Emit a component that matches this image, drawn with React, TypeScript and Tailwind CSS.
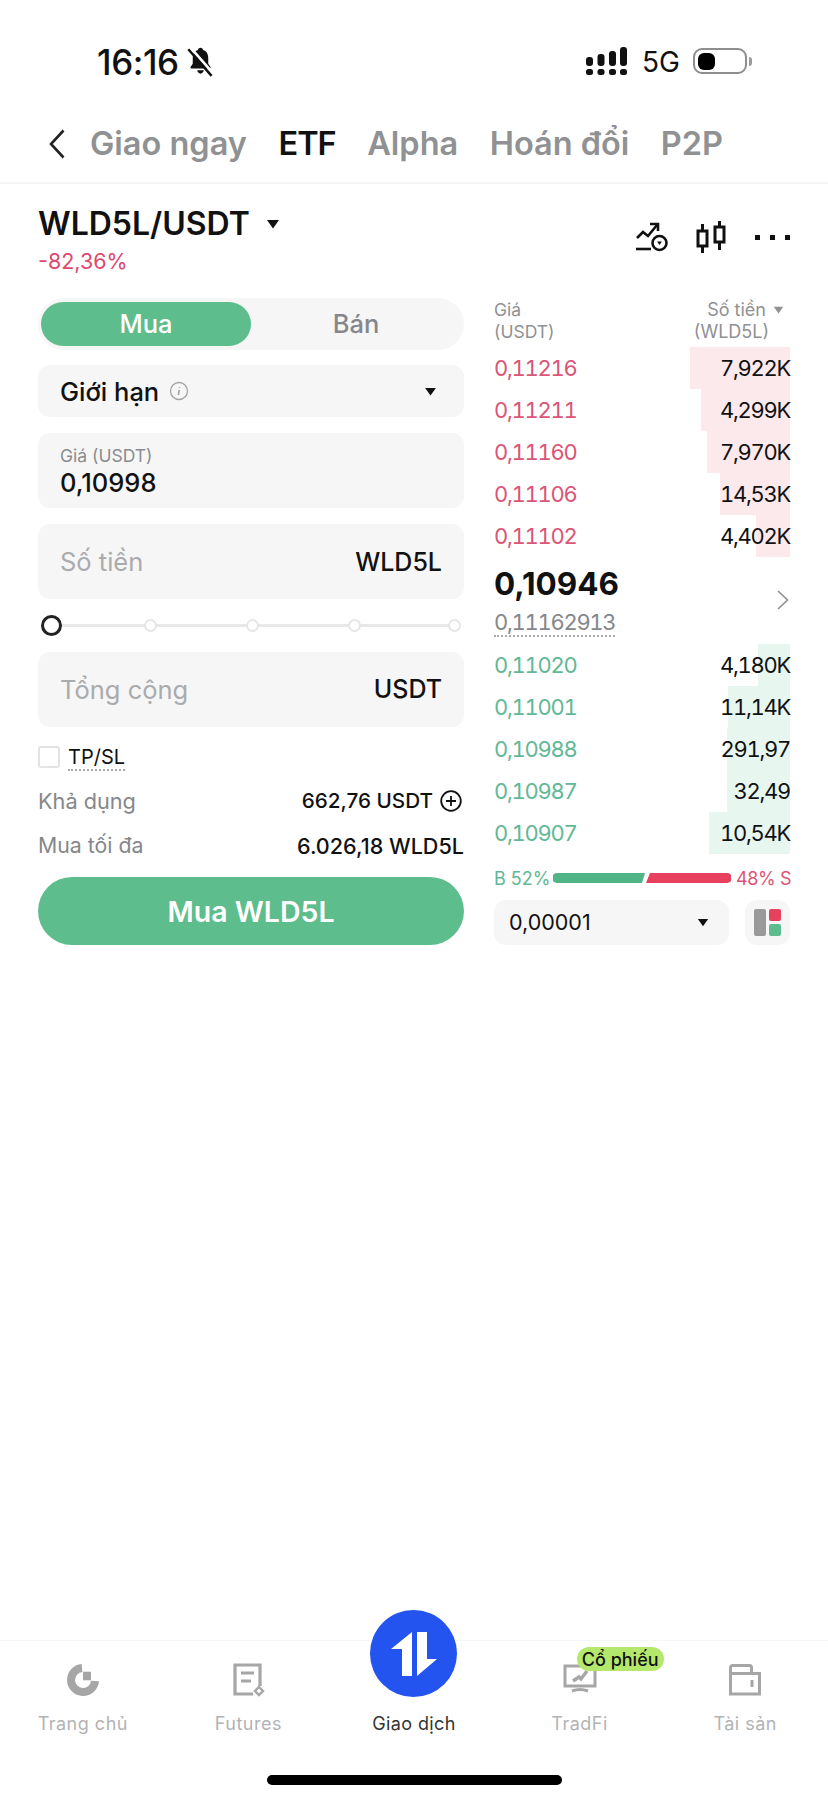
const TABS = [
  { label: "Giao ngay", active: false },
  { label: "ETF", active: true },
  { label: "Alpha", active: false },
  { label: "Hoán đổi", active: false },
  { label: "P2P", active: false },
];

const ASKS = [
  { price: "0,11216", amount: "7,922K", depth: 100 },
  { price: "0,11211", amount: "4,299K", depth: 89 },
  { price: "0,11160", amount: "7,970K", depth: 83 },
  { price: "0,11106", amount: "14,53K", depth: 70 },
  { price: "0,11102", amount: "4,402K", depth: 34 },
];

const BIDS = [
  { price: "0,11020", amount: "4,180K", depth: 32 },
  { price: "0,11001", amount: "11,14K", depth: 62 },
  { price: "0,10988", amount: "291,97", depth: 63 },
  { price: "0,10987", amount: "32,49", depth: 63 },
  { price: "0,10907", amount: "10,54K", depth: 81 },
];

function Caret({ className }: { className: string }) {
  return (
    <svg viewBox="0 0 14 10" className={className} fill="currentColor">
      <path d="M1 1h12L7 9.5z" />
    </svg>
  );
}

function StatusBar() {
  return (
    <div className="flex h-[100px] items-start pt-[42px] pl-[97px] pr-[76px]">
      <span className="text-[35px] font-medium leading-[40px] tracking-[-0.4px] text-[#111]">16:16</span>
      <svg viewBox="0 0 28 28" className="mt-[4px] ml-[6px] h-[31px] w-[31px] text-[#111]" fill="currentColor">
        <path d="M14 1.5c-1.300 0-2.200.9-2.300 2C8.700 4.300 7 7 7 11v5l-2 3c-.4.7 0 1.300.8 1.300h16.400c.8 0 1.200-.6.8-1.300l-2-3v-5c0-4-1.700-6.700-4.700-7.500-.1-1.100-1-2-2.300-2z" />
        <path d="M11 22c.2 1.700 1.500 3 3 3s2.800-1.300 3-3z" />
        <path d="M5 1.500l21 24" stroke="white" strokeWidth="2.400" />
        <path d="M3 3l21 24" stroke="currentColor" strokeWidth="2.200" />
      </svg>
      <div className="flex-1" />
      <svg viewBox="0 0 41 28" className="mt-[5px] h-[28px] w-[41px] text-[#111]" fill="currentColor">
        <rect x="0" y="22" width="7" height="6" rx="2.500" />
        <rect x="11.500" y="22" width="7" height="6" rx="2.500" />
        <rect x="23" y="22" width="7" height="6" rx="2.500" />
        <rect x="34" y="22" width="7" height="6" rx="2.500" />
        <rect x="0" y="10" width="7" height="9" rx="3" />
        <rect x="11.500" y="7" width="7" height="12" rx="3" />
        <rect x="23" y="4" width="7" height="15" rx="3" />
        <rect x="34" y="0" width="7" height="19" rx="3" />
      </svg>
      <span className="ml-[15px] text-[28px] font-normal leading-[40px] text-[#111]">5G</span>
      <div className="mt-[6px] ml-[13px] flex h-[26px] w-[54px] items-center rounded-[9px] border-[2.5px] border-[#8e8e8e] pl-[3px]">
        <div className="h-[17px] w-[17px] rounded-[6px] bg-black" />
      </div>
      <div className="mt-[15px] ml-[2px] h-[9px] w-[3px] rounded-r-full bg-[#9a9a9a]" />
    </div>
  );
}

function TopTabs() {
  return (
    <div className="flex h-[84px] items-start border-b-2 border-[#f5f5f6] pt-[24px] pl-[49px]">
      <svg viewBox="0 0 16 30" className="mt-[5px] h-[30px] w-[16px] text-[#222]" fill="none" stroke="currentColor" strokeWidth="2.600">
        <path d="M14.500 1.500L2 15l12.500 13.500" />
      </svg>
      <div className="ml-[25px] flex gap-[31.5px]">
        {TABS.map((tab) => (
          <span
            key={tab.label}
            className={`text-[32.5px] font-semibold leading-[40px] ${tab.active ? "tracking-[-1px] text-[#111]" : "text-[#8f9193]"}`}
          >
            {tab.label}
          </span>
        ))}
      </div>
    </div>
  );
}

function PairHeader() {
  return (
    <div className="flex items-start justify-between pt-[20px] pl-[38px] pr-[38px]">
      <div>
        <div className="flex items-center">
          <span className="text-[32px] font-semibold leading-[40px] text-[#111]">WLD5L/USDT</span>
          <Caret className="ml-[16px] h-[10px] w-[14px] text-[#111]" />
        </div>
        <div className="mt-[4px] text-[21.5px] leading-[26px] text-[#dc4a6e]">-82,36%</div>
      </div>
      <div className="mt-[17px] flex items-center text-[#111]">
        <svg viewBox="0 0 34 30" className="h-[30px] w-[34px]" fill="none" stroke="currentColor" strokeWidth="2.600">
          <path d="M2 16l6-6 5 4 9-11" />
          <path d="M15 2h8v7" />
          <path d="M1 27h15" />
          <circle cx="24.500" cy="21" r="7" />
          <path d="M22 19.500h5L24.500 23z" fill="currentColor" stroke="none" />
        </svg>
        <svg viewBox="0 0 30 32" className="ml-[27px] h-[32px] w-[30px]" fill="none" stroke="currentColor" strokeWidth="3">
          <rect x="2" y="10" width="9" height="15" />
          <path d="M6.500 3v7M6.500 25v7" />
          <rect x="19" y="6" width="9" height="15" />
          <path d="M23.500 0v6M23.500 21v8" />
        </svg>
        <div className="ml-[29px] flex gap-[10px]">
          <div className="h-[5px] w-[5px] bg-[#111]" />
          <div className="h-[5px] w-[5px] bg-[#111]" />
          <div className="h-[5px] w-[5px] bg-[#111]" />
        </div>
      </div>
    </div>
  );
}

function OrderSlider() {
  const dots = ["ml-[82px]", "ml-[89px]", "ml-[89px]", "ml-[87px]"];
  return (
    <div className="relative flex h-[53px] items-center pl-[41px]">
      <div className="absolute left-[51px] right-[6px] h-[3px] bg-[#e8e8e8]" />
      <div className="relative h-[21px] w-[21px] rounded-full border-[3.5px] border-[#222] bg-white" />
      {dots.map((margin, i) => (
        <div key={i} className={`relative h-[13px] w-[13px] rounded-full border-2 border-[#e6e6e6] bg-white ${margin}`} />
      ))}
    </div>
  );
}

function OrderForm() {
  return (
    <div className="w-[426px]">
      <div className="flex h-[52px] items-center rounded-full bg-[#f6f6f7] px-[3px]">
        <div className="flex h-[44px] w-[210px] items-center justify-center rounded-full bg-[#5dbd8d] pt-[1px] text-[25.5px] font-medium text-white">
          Mua
        </div>
        <div className="flex-1 pt-[1px] text-center text-[25.5px] font-medium text-[#85878a]">Bán</div>
      </div>

      <div className="mt-[15px] flex h-[52px] items-center rounded-[12px] bg-[#f6f6f7] pl-[22px] pr-[27px]">
        <span className="pt-[3px] text-[25.5px] font-medium text-[#111]">Giới hạn</span>
        <svg viewBox="0 0 20 20" className="ml-[10px] h-[20px] w-[20px] text-[#a3a3a3]" fill="none" stroke="currentColor" strokeWidth="1.300">
          <circle cx="10" cy="10" r="8.500" />
          <path d="M10.500 6v.8M10.300 9l-1 5" strokeWidth="1.600" />
        </svg>
        <div className="flex-1" />
        <Caret className="h-[9px] w-[13px] text-[#111]" />
      </div>

      <div className="mt-[16px] h-[75px] rounded-[12px] bg-[#f6f6f7] pl-[22px] pt-[11px]">
        <div className="text-[17.5px] leading-[24px] text-[#8a8c8e]">Giá (USDT)</div>
        <div className="text-[25.5px] font-medium leading-[30px] text-[#111]">0,10998</div>
      </div>

      <div className="mt-[16px] flex h-[75px] items-center justify-between rounded-[12px] bg-[#f6f6f7] px-[22px]">
        <span className="pt-[2px] text-[25.5px] text-[#a9abad]">Số tiền</span>
        <span className="pt-[2px] text-[25px] font-medium text-[#111]">WLD5L</span>
      </div>

      <div className="-ml-[38px]">
        <OrderSlider />
      </div>

      <div className="flex h-[75px] items-center justify-between rounded-[12px] bg-[#f6f6f7] px-[22px]">
        <span className="pt-[1px] text-[25.5px] text-[#a9abad]">Tổng cộng</span>
        <span className="pt-[1px] text-[25px] font-medium text-[#111]">USDT</span>
      </div>

      <div className="mt-[19px] flex h-[22px] items-center">
        <div className="h-[22px] w-[22px] rounded-[3px] border-2 border-[#e3e3e3] bg-white" />
        <span className="mt-[2px] ml-[8px] border-b-2 border-dotted border-[#aaa] text-[20px] leading-[24px] text-[#111]">TP/SL</span>
      </div>

      <div className="mt-[18px] flex h-[30px] items-center justify-between">
        <span className="text-[21.7px] text-[#85878a]">Khả dụng</span>
        <div className="flex items-center">
          <span className="text-[20.7px] font-medium text-[#111]">662,76 USDT</span>
          <svg viewBox="0 0 22 22" className="mr-[2px] ml-[7px] h-[22px] w-[22px] text-[#111]" fill="none" stroke="currentColor" strokeWidth="1.800">
            <circle cx="11" cy="11" r="9.800" />
            <path d="M11 6v10M6 11h10" />
          </svg>
        </div>
      </div>

      <div className="mt-[15px] flex h-[30px] items-center justify-between">
        <span className="text-[21.3px] text-[#85878a]">Mua tối đa</span>
        <span className="text-[21.6px] font-medium text-[#111]">6.026,18 WLD5L</span>
      </div>

      <button className="mt-[16px] h-[68px] w-full rounded-full bg-[#5dbd8d] pt-[3px] text-[28.5px] font-semibold text-white">
        Mua WLD5L
      </button>
    </div>
  );
}

type Level = { price: string; amount: string; depth: number };

function BookRow({ level, side }: { level: Level; side: "ask" | "bid" }) {
  const isAsk = side === "ask";
  return (
    <div className="relative flex h-[42px] items-center justify-between tracking-[-1.3px] tabular-nums">
      <div
        className={`absolute top-0 right-0 bottom-0 ${isAsk ? "bg-[#fbe9ec]" : "bg-[#e8f6f0]"}`}
        style={{ width: level.depth }}
      />
      <span className={`relative text-[22px] ${isAsk ? "text-[#dc5476]" : "text-[#62b896]"}`}>{level.price}</span>
      <span className="relative text-[22px] text-[#111]">{level.amount}</span>
    </div>
  );
}

function OrderBook() {
  return (
    <div className="w-[296px]">
      <div className="flex h-[49px] justify-between pt-[1px] text-[18px] leading-[22px] text-[#8f9193]">
        <div className="text-[17.5px]">
          Giá
          <br />
          (USDT)
        </div>
        <div className="pr-[7px] text-right">
          <div className="flex items-center justify-end">
            Số tiền
            <Caret className="mr-[-1px] ml-[7px] h-[8px] w-[11px] text-[#8f9193]" />
          </div>
          <div className="pr-[14px]">(WLD5L)</div>
        </div>
      </div>

      {ASKS.map((level) => (
        <BookRow key={level.price} level={level} side="ask" />
      ))}

      <div className="relative h-[87px]">
        <div className="pt-[8px] text-[31.5px] leading-[38px] font-bold text-[#111]">0,10946</div>
        <div className="mt-[6px] inline-block border-b-2 border-dotted border-[#aaa] text-[22px] leading-[26px] tracking-[-1.3px] tabular-nums text-[#85878a]">
          0,11162913
        </div>
        <svg viewBox="0 0 12 20" className="absolute top-[33px] right-[1px] h-[20px] w-[12px] text-[#8f9193]" fill="none" stroke="currentColor" strokeWidth="1.700">
          <path d="M1 1l9.500 9L1 19" />
        </svg>
      </div>

      {BIDS.map((level) => (
        <BookRow key={level.price} level={level} side="bid" />
      ))}

      <div className="mt-[14px] flex h-[20px] items-center text-[18px] whitespace-nowrap">
        <span className="w-[53px] shrink-0 text-[#62b896]">B 52%</span>
        <svg viewBox="0 0 178 10" className="ml-[6px] h-[10px] w-[178px] shrink-0">
          <path d="M4 0h88l-3 10H4a5 5 0 0 1 0-10z" fill="#4fb486" />
          <path d="M97 0h77a5 5 0 0 1 0 10H93z" fill="#e8405f" />
        </svg>
        <span className="ml-[5px] tracking-[-0.4px] text-[#dc5476]">48% S</span>
      </div>

      <div className="mt-[12px] flex gap-[16px]">
        <div className="flex h-[45px] w-[235px] items-center justify-between rounded-[12px] bg-[#f6f6f7] pl-[15px] pr-[20px]">
          <span className="text-[21.5px] font-normal text-[#111]">0,00001</span>
          <Caret className="h-[9px] w-[12px] text-[#111]" />
        </div>
        <div className="flex h-[45px] w-[45px] items-center justify-center gap-[3px] rounded-[12px] bg-[#f6f6f7]">
          <div className="h-[27px] w-[12px] rounded-[2px] bg-[#9a9a9a]" />
          <div className="flex flex-col gap-[3px]">
            <div className="h-[12px] w-[12px] rounded-[2px] bg-[#e8405f]" />
            <div className="h-[12px] w-[12px] rounded-[2px] bg-[#5dbd8d]" />
          </div>
        </div>
      </div>
    </div>
  );
}

function HomeIcon() {
  return (
    <svg viewBox="0 0 34 34" className="h-[34px] w-[34px]" fill="none" stroke="#a6a6a6" strokeWidth="8">
      <path d="M16 5A12 12 0 1 0 29 18" />
      <rect x="17" y="8.700" width="8" height="8.600" fill="#a6a6a6" stroke="none" />
    </svg>
  );
}

function FuturesIcon() {
  return (
    <svg viewBox="0 0 34 34" className="h-[34px] w-[34px]" fill="none" stroke="#a6a6a6" strokeWidth="3">
      <path d="M22 31H4V2h25v21" strokeWidth="3.200" />
      <path d="M10 10h13M10 18h10" />
      <path d="M28 24l4 4-4 4-4-4z" strokeWidth="2.400" />
    </svg>
  );
}

function TradfiIcon() {
  return (
    <svg viewBox="0 0 34 34" className="h-[34px] w-[34px]" fill="none" stroke="#a6a6a6" strokeWidth="3">
      <path d="M2 3h30v20H2z" />
      <path d="M9 28c5-2 11-2 16 0" />
      <path d="M10 18l6-4 2 2 6-8" strokeWidth="3.400" />
    </svg>
  );
}

function AssetsIcon() {
  return (
    <svg viewBox="0 0 34 34" className="h-[34px] w-[34px]" fill="none" stroke="#a6a6a6" strokeWidth="3">
      <path d="M2.500 31V4.500a2 2 0 0 1 2-2h17a2 2 0 0 1 2 2V9" />
      <path d="M2.500 10.500H31.500V31H2.500z" />
      <path d="M24 17v7" />
    </svg>
  );
}

function NavItem({ label, icon }: { label: string; icon: React.ReactNode }) {
  return (
    <div className="flex flex-col items-center pt-[20px]">
      <div className="flex h-[38px] items-center justify-center">{icon}</div>
      <span className="mt-[13px] text-[18px] leading-[24px] tracking-[0.5px] text-[#b2b3b5]">{label}</span>
    </div>
  );
}

function BottomNav() {
  return (
    <div className="h-[160px] border-t border-[#f6f6f6]">
      <div className="grid h-[132px] grid-cols-5">
        <NavItem label="Trang chủ" icon={<HomeIcon />} />
        <NavItem label="Futures" icon={<FuturesIcon />} />
        <div className="flex flex-col items-center">
          <div className="-mt-[31px] flex h-[87px] w-[87px] items-center justify-center rounded-full bg-[#2354f0]">
            <svg viewBox="0 0 46 44" className="h-[44px] w-[46px]" fill="white">
              <path d="M21 0v44h-10V17H0z" />
              <path d="M26 0h10v27h10L26 44z" />
            </svg>
          </div>
          <span className="mt-[15px] text-[18px] leading-[24px] tracking-[0.4px] text-[#333]">Giao dịch</span>
        </div>
        <div className="relative">
          <NavItem label="TradFi" icon={<TradfiIcon />} />
          <div className="absolute top-[6px] left-[80px] flex h-[24px] items-center rounded-full bg-[#b4e86c] px-[5px] text-[18px] font-medium whitespace-nowrap text-[#111]">
            Cổ phiếu
          </div>
        </div>
        <NavItem label="Tài sản" icon={<AssetsIcon />} />
      </div>
      <div className="flex justify-center pt-[2px]">
        <div className="h-[10px] w-[295px] rounded-full bg-black" />
      </div>
    </div>
  );
}

export default function App() {
  return (
    <div className="flex h-[1800px] w-[828px] flex-col bg-white font-['Inter',sans-serif]">
      <StatusBar />
      <TopTabs />
      <PairHeader />
      <div className="mt-[24px] flex gap-[30px] px-[38px]">
        <OrderForm />
        <OrderBook />
      </div>
      <div className="flex-1" />
      <BottomNav />
    </div>
  );
}
